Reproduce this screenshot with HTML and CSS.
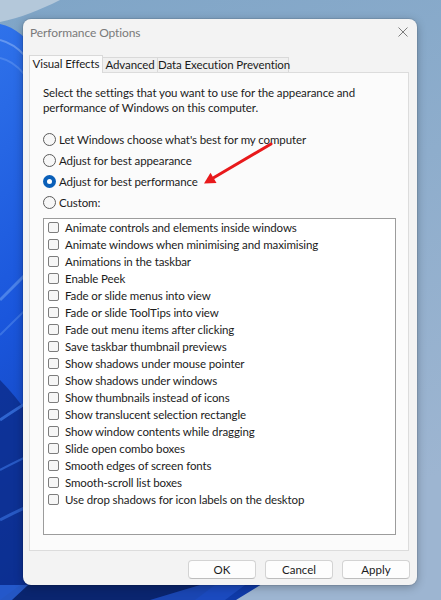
FILE: index.html
```html
<!DOCTYPE HTML>
<html>
<head>
<meta charset="utf-8">
<title>Performance Options</title>
<link rel="stylesheet" href="styles.css">
</head>

<body>
<div class="desk">
	<svg class="wall" width="441" height="600" viewBox="0 0 441 600">
		<defs>
			<linearGradient id="sky" x1="0" y1="0" x2="0.3" y2="1">
				<stop offset="0" stop-color="#7fa5c7"/>
				<stop offset="1" stop-color="#9db5d1"/>
			</linearGradient>
			<linearGradient id="bloom" x1="0" y1="0" x2="0.4" y2="1">
				<stop offset="0" stop-color="#2f72ea"/>
				<stop offset="0.45" stop-color="#1a56dc"/>
				<stop offset="1" stop-color="#0f3aa8"/>
			</linearGradient>
		</defs>
		<rect width="441" height="600" fill="url(#sky)"/>
		<path d="M0,0 L60,0 C40,10 20,18 0,22 Z" fill="#b4c8da"/>
		<path d="M0,24 C30,30 55,70 70,140 L70,500 C120,555 200,578 262,584 L236,600 L0,600 Z" fill="url(#bloom)"/>
		<path d="M0,40 C20,45 35,65 45,90" stroke="#7aa6f2" stroke-width="2" fill="none" opacity="0.7"/>
		<path d="M0,58 C18,62 32,80 40,105" stroke="#5d93f0" stroke-width="2" fill="none" opacity="0.6"/>
		<path d="M0,300 C15,285 30,270 45,255" stroke="#6b9ff2" stroke-width="3" fill="none" opacity="0.6"/>
		<path d="M0,335 C15,320 30,305 45,292" stroke="#4f86ea" stroke-width="2" fill="none" opacity="0.6"/>
		<path d="M0,380 C20,400 40,430 60,460 L60,600 L0,600 Z" fill="#0b2a86" opacity="0.75"/>
		<path d="M0,420 C15,410 30,400 45,392" stroke="#3f7ae8" stroke-width="3" fill="none" opacity="0.7"/>
		<path d="M0,470 C15,462 30,455 45,448" stroke="#3a74e4" stroke-width="2" fill="none" opacity="0.6"/>
		<path d="M0,520 C15,512 30,505 45,500" stroke="#3a74e4" stroke-width="3" fill="none" opacity="0.6"/>
		<path d="M20,585 L215,585 L195,600 L0,600 Z" fill="#0a256f"/>
		<path d="M150,600 L200,585 L245,585 L225,600 Z" fill="#1e4fc4" opacity="0.8"/>
		<path d="M0,585 L28,585 L12,600 L0,600 Z" fill="#2a63d8" opacity="0.8"/>
	</svg>

	<div class="dlg">
		<div class="titlebar">
			<span class="title">Performance Options</span>
			<svg class="close" width="10" height="10" viewBox="0 0 10 10">
				<path d="M0.5,0.5 L9.5,9.5 M9.5,0.5 L0.5,9.5" stroke="#7c7c7c" stroke-width="1" fill="none"/>
			</svg>
		</div>

		<div class="tabs">
			<div class="tab ac tab-ve">Visual Effects</div>
			<div class="tab tab-adv">Advanced</div>
			<div class="tab tab-dep">Data Execution Prevention</div>
		</div>

		<div class="panel">
			<p class="intro">Select the settings that you want to use for the appearance and<br>performance of Windows on this computer.</p>

			<div class="radios">
				<div class="radio"><span class="dot"></span>Let Windows choose what's best for my computer</div>
				<div class="radio"><span class="dot"></span>Adjust for best appearance</div>
				<div class="radio"><span class="dot ac"></span>Adjust for best performance</div>
				<div class="radio"><span class="dot"></span>Custom:</div>
			</div>

			<div class="list">
				<div class="item"><span class="box"></span>Animate controls and elements inside windows</div>
				<div class="item"><span class="box"></span>Animate windows when minimising and maximising</div>
				<div class="item"><span class="box"></span>Animations in the taskbar</div>
				<div class="item"><span class="box"></span>Enable Peek</div>
				<div class="item"><span class="box"></span>Fade or slide menus into view</div>
				<div class="item"><span class="box"></span>Fade or slide ToolTips into view</div>
				<div class="item"><span class="box"></span>Fade out menu items after clicking</div>
				<div class="item"><span class="box"></span>Save taskbar thumbnail previews</div>
				<div class="item"><span class="box"></span>Show shadows under mouse pointer</div>
				<div class="item"><span class="box"></span>Show shadows under windows</div>
				<div class="item"><span class="box"></span>Show thumbnails instead of icons</div>
				<div class="item"><span class="box"></span>Show translucent selection rectangle</div>
				<div class="item"><span class="box"></span>Show window contents while dragging</div>
				<div class="item"><span class="box"></span>Slide open combo boxes</div>
				<div class="item"><span class="box"></span>Smooth edges of screen fonts</div>
				<div class="item"><span class="box"></span>Smooth-scroll list boxes</div>
				<div class="item"><span class="box"></span>Use drop shadows for icon labels on the desktop</div>
			</div>

			<!-- red annotation arrow -->
			<svg class="arrow" width="380" height="479" viewBox="0 0 380 479">
				<path d="M241,71 L184,104.5" stroke="#e8191b" stroke-width="3" stroke-linecap="round" fill="none"/>
				<polygon points="174,110.5 186.5,110.1 180.5,99.7" fill="#e8191b"/>
			</svg>
		</div>

		<div class="buttons">
			<button class="btn">OK</button>
			<button class="btn">Cancel</button>
			<button class="btn">Apply</button>
		</div>
	</div>
</div>
</body>
</html>
```

FILE: styles.css
```css
* {margin:0; padding:0; box-sizing:border-box;}
body {width:441px; height:600px; overflow:hidden; font-family:Lato, "Noto Sans", sans-serif; font-size:11.5px; letter-spacing:-0.1px; color:#1b1b1b;}

.desk {display:grid; width:441px; height:600px;}
.wall {grid-area:1/1; display:block;}

.dlg {grid-area:1/1; align-self:start; justify-self:start; margin:19px 0 0 23px; width:394px; height:566px; background:#f3f3f3; border-radius:8px; box-shadow:0 2px 10px rgba(0,0,0,0.28), 0 0 0 1px rgba(0,0,0,0.08); display:flex; flex-direction:column;}

.titlebar {height:36px; display:flex; justify-content:space-between; align-items:flex-start; padding:6px 9px 0 7px;}
.title {line-height:16px; color:#7a7a7a; font-size:12px;}
.close {margin-top:2px;}

.tabs {display:flex; align-items:flex-end; height:17px; margin-left:6px; position:relative; z-index:2;}
.tab {height:15px; line-height:14px; text-align:center; border:1px solid #d9d9d9; border-bottom:none; background:#f0f0f0; margin-left:-1px; white-space:nowrap;}
.tab.ac {height:18px; line-height:15px; background:#fbfbfb; margin-left:0; margin-bottom:-1px; position:relative; z-index:3;}
.tab-ve {width:74px;}
.tab-adv {width:56px;}
.tab-dep {width:132px;}

.panel {position:relative; margin:0 8px 0 6px; height:479px; background:#fbfbfb; border:1px solid #dcdcdc; padding:12px 0 0 13px;}
.intro {line-height:15px;}

.radios {margin-top:14px;}
.radio {height:21px; display:flex; align-items:center; white-space:nowrap;}
.dot {width:13px; height:13px; border:1px solid #5b5b5b; border-radius:50%; background:#f7f7f7; margin-right:3px; flex:none;}
.dot.ac {border:none; background:#0a5fb8; position:relative;}
.dot.ac::after {content:""; position:absolute; left:4px; top:4px; width:5px; height:5px; border-radius:50%; background:#fff;}

.list {margin-top:5px; width:353px; height:317px; background:#fff; border:1px solid #9c9c9c;}
.item {height:17px; display:flex; align-items:center; padding-left:4px; white-space:nowrap;}
.box {width:11px; height:11px; border:1px solid #7d7d7d; border-radius:2px; background:#f6f6f6; margin-right:6px; flex:none;}

.arrow {position:absolute; left:0; top:0; pointer-events:none;}

.buttons {display:flex; justify-content:flex-end; gap:9px; padding:9px 7px 0 0;}
.btn {width:68px; height:19px; font:inherit; color:#1b1b1b; background:#fdfdfd; border:1px solid #d3d3d3; border-bottom-color:#bdbdbd; border-radius:4px;}
```
